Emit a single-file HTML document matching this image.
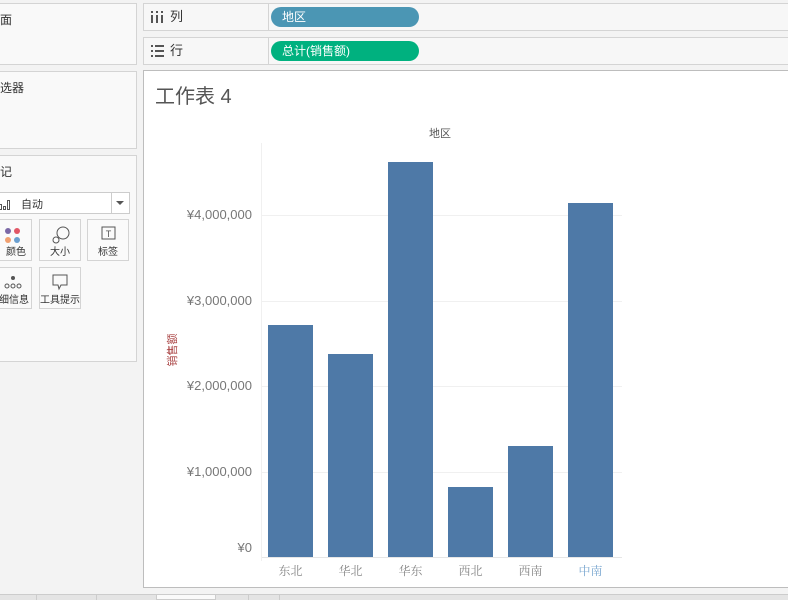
<!DOCTYPE html>
<html><head><meta charset="utf-8"><style>
*{margin:0;padding:0;box-sizing:border-box}
body{width:788px;height:600px;overflow:hidden;background:#f3f3f3;font-family:"Liberation Sans","Noto Sans CJK SC",sans-serif;position:relative;color:#333}
.a{position:absolute}
.panel{position:absolute;background:#f9f9f9;border:1px solid #d4d4d4}
.t{font-size:12px;color:#333;line-height:14px}
.card{position:absolute;width:42px;height:42px;border:1px solid #d4d4d4;background:#fafafa;font-size:10px;text-align:center}
.card span{position:absolute;bottom:2px;left:0;right:0;white-space:nowrap}
.pill{position:absolute;height:20px;border-radius:10px;color:#fff;font-size:12px;line-height:20px;padding-left:11px}
.yl{position:absolute;right:536px;font-size:13px;color:#777;font-family:"Liberation Sans",sans-serif}
.xl{position:absolute;top:562px;width:45px;text-align:center;font-size:12px;color:#888;font-family:"Noto Serif CJK SC",serif}
.bar{position:absolute;width:45px;background:#4e79a7;bottom:43px}
.g{position:absolute;left:262px;width:360px;height:1px;background:#f0f0f0}
</style></head><body>
<div class="panel" style="left:-1px;top:3px;width:138px;height:62px"><div class="t a" style="left:-12px;top:9px">页面</div></div>
<div class="panel" style="left:-1px;top:71px;width:138px;height:78px"><div class="t a" style="left:-12px;top:9px">筛选器</div></div>
<div class="panel" style="left:-1px;top:155px;width:138px;height:207px">
<div class="t a" style="left:-12px;top:9px">标记</div>
<div class="a" style="left:-10px;top:36px;width:140px;height:22px;border:1px solid #ccc;background:#fff">
<svg class="a" style="left:8px;top:5px" width="12" height="12"><g fill="none" stroke="#555"><rect x="0.5" y="6.5" width="2" height="5"/><rect x="4.5" y="8.5" width="2" height="3"/><rect x="8.5" y="2.5" width="2" height="9"/></g></svg>
<div class="a" style="left:30px;top:3px;font-size:11px">自动</div>
<div class="a" style="left:120px;top:0;width:1px;height:20px;background:#ccc"></div>
<div class="a" style="left:125px;top:8px;border:4px solid transparent;border-top:4px solid #555"></div></div>
</div>
<div class="card" style="left:-10px;top:219px"><svg class="a" style="left:12px;top:6px" width="22" height="18"><circle cx="5" cy="5" r="3" fill="#7b68a6"/><circle cx="14" cy="5" r="3" fill="#e15766"/><circle cx="5" cy="14" r="3" fill="#f0a070"/><circle cx="14" cy="14" r="3" fill="#6a9fd0"/></svg><span style="left:10px">颜色</span></div>
<div class="card" style="left:39px;top:219px"><svg class="a" style="left:12px;top:6px" width="20" height="18"><circle cx="11" cy="7" r="6" fill="none" stroke="#555"/><circle cx="4" cy="14" r="3" fill="#fff" stroke="#555"/></svg><span>大小</span></div>
<div class="card" style="left:87px;top:219px"><svg class="a" style="left:13px;top:6px" width="16" height="16"><rect x="1" y="1" width="13" height="12" fill="none" stroke="#555"/><text x="7.5" y="11" font-size="9" text-anchor="middle" fill="#555">T</text></svg><span>标签</span></div>
<div class="card" style="left:-10px;top:267px"><svg class="a" style="left:12px;top:7px" width="20" height="14"><circle cx="10" cy="3" r="2" fill="#555"/><circle cx="4" cy="11" r="2" fill="none" stroke="#555"/><circle cx="10" cy="11" r="2" fill="none" stroke="#555"/><circle cx="16" cy="11" r="2" fill="none" stroke="#555"/></svg><span style="left:-4px">详细信息</span></div>
<div class="card" style="left:39px;top:267px"><svg class="a" style="left:12px;top:6px" width="18" height="18"><path d="M1 1H15V11H9L7 15L6 11H1Z" fill="none" stroke="#555"/></svg><span>工具提示</span></div>
<!-- shelves -->
<div class="panel" style="left:143px;top:3px;width:650px;height:28px;background:#f7f7f7"><div class="a" style="left:124px;top:0;width:1px;height:26px;background:#d4d4d4"></div>
<svg class="a" style="left:7px;top:7px" width="14" height="12"><g fill="#555"><rect x="0" y="0" width="2" height="2"/><rect x="0" y="4" width="2" height="8"/><rect x="5" y="0" width="2" height="2"/><rect x="5" y="4" width="2" height="8"/><rect x="10" y="0" width="2" height="2"/><rect x="10" y="4" width="2" height="8"/></g></svg>
<div class="a" style="left:26px;top:5px;font-size:13px;line-height:16px">列</div></div>
<div class="panel" style="left:143px;top:37px;width:650px;height:28px;background:#f7f7f7"><div class="a" style="left:124px;top:0;width:1px;height:26px;background:#d4d4d4"></div>
<svg class="a" style="left:7px;top:7px" width="14" height="12"><g fill="#555"><rect x="0" y="0" width="2" height="2"/><rect x="4" y="0" width="9" height="2"/><rect x="0" y="5" width="2" height="2"/><rect x="4" y="5" width="9" height="2"/><rect x="0" y="10" width="2" height="2"/><rect x="4" y="10" width="9" height="2"/></g></svg>
<div class="a" style="left:26px;top:5px;font-size:13px;line-height:16px">行</div></div>
<div class="pill" style="left:271px;top:7px;width:148px;background:#4b96b4">地区</div>
<div class="pill" style="left:271px;top:41px;width:148px;background:#00b17f">总计(销售额)</div>
<!-- sheet -->
<div class="a" style="left:143px;top:70px;width:650px;height:518px;background:#fff;border:1px solid #bdbdbd"></div>
<div class="a" style="left:155px;top:84px;font-size:20px;color:#555;line-height:26px">工作表 4</div>
<div class="a" style="left:429px;top:125px;font-size:11px;color:#555">地区</div>
<div class="a" style="left:261px;top:143px;width:1px;height:418px;background:#f0f0f0"></div>
<div class="g" style="top:215px"></div><div class="g" style="top:301px"></div><div class="g" style="top:386px"></div><div class="g" style="top:472px"></div>
<div class="g" style="top:557px;background:#e6e6e6"></div>
<div class="yl" style="top:207px">¥4,000,000</div>
<div class="yl" style="top:293px">¥3,000,000</div>
<div class="yl" style="top:378px">¥2,000,000</div>
<div class="yl" style="top:464px">¥1,000,000</div>
<div class="yl" style="top:540px">¥0</div>
<div class="a" style="left:147px;top:342px;width:50px;text-align:center;font-size:11px;color:#a44;transform:rotate(-90deg);white-space:nowrap">销售额</div>
<div class="bar" style="left:268px;top:325px"></div>
<div class="bar" style="left:328px;top:354px"></div>
<div class="bar" style="left:388px;top:162px"></div>
<div class="bar" style="left:448px;top:487px"></div>
<div class="bar" style="left:508px;top:446px"></div>
<div class="bar" style="left:568px;top:203px"></div>
<div class="xl" style="left:268px">东北</div><div class="xl" style="left:328px">华北</div><div class="xl" style="left:388px">华东</div><div class="xl" style="left:448px">西北</div><div class="xl" style="left:508px">西南</div><div class="xl" style="left:568px;color:#7aa7d0">中南</div>
<!-- tabs -->
<div class="a" style="left:0;top:594px;width:788px;height:6px;background:#e4e4e4;border-top:1px solid #ccc"></div>
<div class="a" style="left:36px;top:594px;width:1px;height:6px;background:#ccc"></div>
<div class="a" style="left:96px;top:594px;width:1px;height:6px;background:#ccc"></div>
<div class="a" style="left:156px;top:594px;width:60px;height:6px;background:#fafafa;border:1px solid #ccc"></div>
<div class="a" style="left:248px;top:594px;width:1px;height:6px;background:#ccc"></div>
<div class="a" style="left:279px;top:594px;width:1px;height:6px;background:#ccc"></div>
</body></html>
